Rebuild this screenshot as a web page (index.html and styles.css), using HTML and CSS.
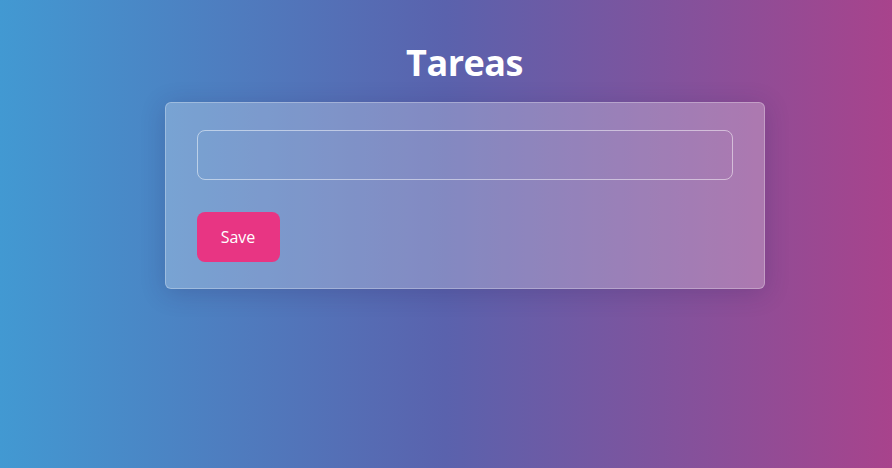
FILE: index.html
```html
<!DOCTYPE html>
<html lang="es">
<head>
<meta charset="utf-8">
<title>Tareas</title>
<link rel="stylesheet" href="styles.css">
</head>
<body>
<main class="page">
  <div class="container">
    <h1 class="title">Tareas</h1>
    <form class="card">
      <input class="task-input" type="text" aria-label="Tarea">
      <button class="save-btn" type="button">Save</button>
    </form>
  </div>
</main>
</body>
</html>
```
FILE: styles.css
```css
html, body {
  margin: 0;
  height: 100%;
}
body {
  background: linear-gradient(to right, #4299d2 0%, #5a62ad 50%, #a8438c 100%);
  font-family: "Open Sans", "Noto Sans", sans-serif;
  color: #fff;
}
.page {
  padding-left: 37px;
  padding-top: 36px;
}
.container {
  width: 600px;
  margin: 0 auto;
  display: flex;
  flex-direction: column;
  align-items: center;
}
.title {
  margin: 0 0 12px;
  font-size: 36px;
  line-height: 54px;
  font-weight: 700;
  letter-spacing: -0.5px;
}
.card {
  box-sizing: border-box;
  width: 600px;
  padding: 27px 31px 26px;
  border: 1px solid rgba(255, 255, 255, 0.28);
  border-radius: 6px;
  background: rgba(255, 255, 255, 0.25);
  box-shadow: 0 4px 24px rgba(40, 30, 90, 0.22);
  display: flex;
  flex-direction: column;
  align-items: flex-start;
  gap: 32px;
}
.task-input {
  box-sizing: border-box;
  width: 100%;
  height: 50px;
  border: 1px solid rgba(255, 255, 255, 0.5);
  border-radius: 8px;
  background: transparent;
  color: #fff;
  font: inherit;
  padding: 0 14px;
  outline: none;
}
.save-btn {
  box-sizing: border-box;
  width: 83px;
  height: 50px;
  border: none;
  border-radius: 8px;
  background: #e83583;
  color: #fff;
  font-family: "Open Sans", "Noto Sans", sans-serif;
  font-size: 16px;
  cursor: pointer;
}
```
